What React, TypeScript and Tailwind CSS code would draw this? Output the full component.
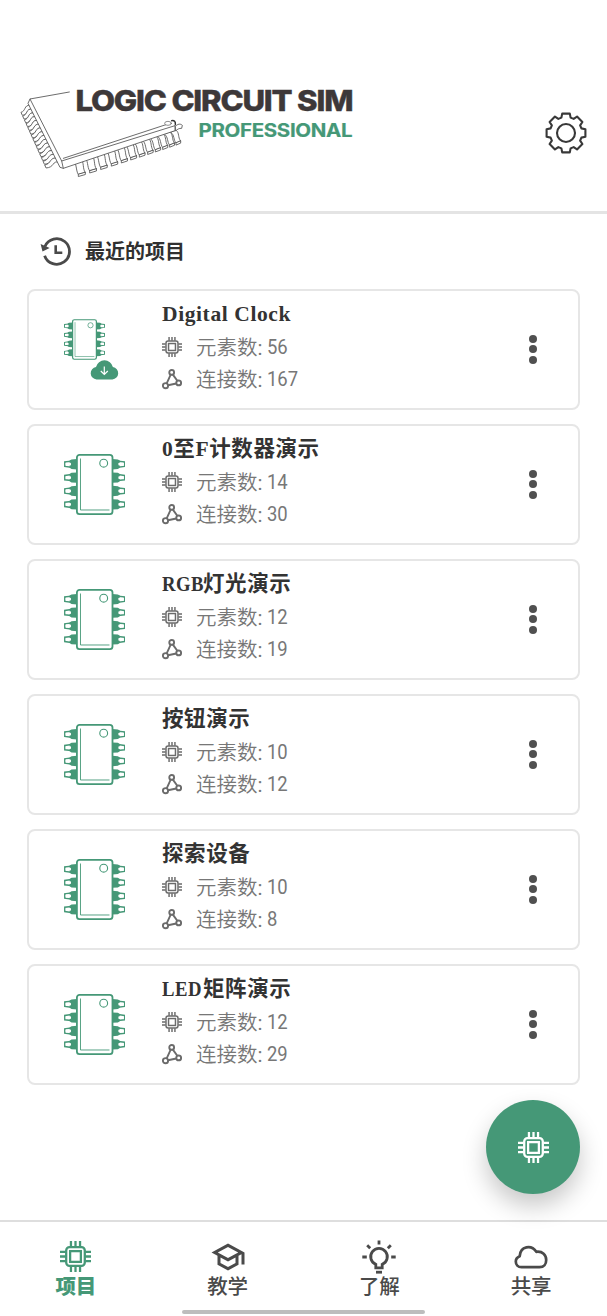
import React from 'react';
import { MdOutlineSchool } from 'react-icons/md';

type Project = { prefix?: string; title: string; elements: number; links: number; cloud?: boolean };

const projects: Project[] = [
  { title: 'Digital Clock', elements: 56, links: 167, cloud: true },
  { title: '0至F计数器演示', elements: 14, links: 30 },
  { prefix: 'RGB', title: '灯光演示', elements: 12, links: 19 },
  { title: '按钮演示', elements: 10, links: 12 },
  { title: '探索设备', elements: 10, links: 8 },
  { prefix: 'LED', title: '矩阵演示', elements: 12, links: 29 },
];

function Logo() {
  const left = Array.from({ length: 15 }, (_, i) => i / 14);
  const right = [190, 224, 257, 289, 319, 347, 373, 398, 421, 443, 464, 483];
  return (
    <svg viewBox="0 0 345 105" className="h-[105px] w-[345px]" fill="none">
      <g transform="scale(0.33333)" stroke="#555" strokeWidth="2.6" strokeLinejoin="round" strokeLinecap="round">
        {left.map((t, i) => {
          const x = 60 + t * 82;
          const y = 76 + t * 158;
          const s = 1 + t * 0.4;
          return (
            <path
              key={i}
              fill="#fff"
              d={`M${x} ${y}c${-9 * s} -1 ${-12 * s} 3 ${-15 * s} 9s${-5 * s} 10 ${-12 * s} 12l4 9c${8 * s} -1 ${12 * s} -5 ${15 * s} -11s${6 * s} -9 ${13 * s} -7`}
            />
          );
        })}
        {right.map((x, i) => {
          const t = i / 11;
          const y = 241 - ((x - 192) / 292) * 84;
          const h = 42 - t * 10;
          const w = 21 - t * 7;
          return (
            <g key={i}>
              <path fill="#fff" d={`M${x} ${y}c11 8 7 ${h * 0.7} 15 ${h}l${w} -6c-9 -12 -3 -${h * 0.75} -13 -${h}z`} />
              <path fill="#fff" d={`M${x + 15} ${y + h}v6l${w} -6v-6z`} />
            </g>
          );
        })}
        <path fill="#fff" stroke="none" d="M60 57L178 36L490 130L499 136L495 152L160 265L150 262L54 70Z" />
        <path d="M178 36L60 57L155 243L495 137M60 57L54 70L150 262L160 265L495 152V137M155 243L160 265M160 235L480 130" strokeWidth="2.6" />
        <ellipse cx="474" cy="130" rx="10" ry="6" strokeWidth="2" fill="#fff" />
        <path fill="#fff" d="M497 138c6-6 14-8 20-2l-2 9c-8 0-12 2-17 7z" />
        <path d="M485 122c8-1 12 2 11 11" strokeWidth="4.5" stroke="#333" />
      </g>
      <text x="59.5" y="30.6" transform="scale(1.1 1)" fill="#3d3839" stroke="#3d3839" strokeWidth="0.4" fontSize="28.3" textLength="252.8" lengthAdjust="spacing" className="font-[Inter,sans-serif] font-extrabold">
        LOGIC CIRCUIT SIM
      </text>
      <text x="168.3" y="57" transform="scale(1.12 1)" fill="#459877" stroke="#459877" strokeWidth="0.2" fontSize="18.3" textLength="137.6" lengthAdjust="spacing" className="font-[Inter,sans-serif] font-bold">
        PROFESSIONAL
      </text>
    </svg>
  );
}

function Gear() {
  const pts: string[] = [];
  for (let i = 0; i < 8; i++) {
    const a = (i * Math.PI) / 4;
    const shape: [number, number][] = [[-4.6, 15.4], [-3.8, 19.4], [3.8, 19.4], [4.6, 15.4]];
    shape.forEach(([u, r]) => {
      pts.push(`${(21 + u * Math.cos(a) + r * Math.sin(a)).toFixed(2)},${(21 + u * Math.sin(a) - r * Math.cos(a)).toFixed(2)}`);
    });
  }
  return (
    <svg viewBox="0 0 42 42" className="size-[42px]" fill="none" stroke="#383838" strokeWidth="2.1" strokeLinejoin="round">
      <polygon points={pts.join(' ')} />
      <circle cx="21" cy="21" r="9" />
    </svg>
  );
}

function History() {
  return (
    <svg viewBox="0 0 31 29" className="h-[29px] w-[31px]" fill="none" stroke="#4a4a4a" strokeWidth="2.8">
      <path d="M4.6 18.7A12.8 12.8 0 1 0 4.9 9.5" />
      <path d="M.6 7l1.9 7.6L9.6 11z" fill="#4a4a4a" stroke="none" />
      <path d="M15.7 8.2v7.6h6.6" strokeWidth="2.6" />
    </svg>
  );
}

function Cpu({ className }: { className: string }) {
  return (
    <svg viewBox="0 0 30 30" className={className} fill="none" stroke="currentColor" strokeWidth="2.2" strokeLinecap="butt">
      <rect x="6" y="6" width="18" height="18" rx="3.2" />
      <rect x="9.8" y="9.8" width="10.4" height="10.4" />
      <path d="M10.6 0v5.5M15 0v5.5M19.4 0v5.5M10.6 24.5V30M15 24.5V30M19.4 24.5V30M0 10.6h5.5M0 15h5.5M0 19.4h5.5M24.5 10.6H30M24.5 15H30M24.5 19.4H30" />
    </svg>
  );
}

function Links() {
  return (
    <svg viewBox="0 0 20 21" className="h-[21px] w-5" fill="none" stroke="#6b6b6b" strokeWidth="1.9">
      <circle cx="9.7" cy="3.4" r="2.4" />
      <circle cx="3.5" cy="16.7" r="2.6" />
      <circle cx="16.7" cy="13.9" r="2.4" />
      <path d="M8.7 5.6L4.7 14.3M10.9 5.6l4.4 6.2M6 16.2l8.3-1.7" />
    </svg>
  );
}

function Pin({ y }: { y: number }) {
  return (
    <>
      <path d={`M13 ${y - 5.2}L7.5 ${y - 4.8}L5.6 ${y - 3.6}V${y + 3.6}L7.5 ${y + 4.8}L13 ${y + 5.2}Z`} fill="#459877" stroke="none" />
      <path d={`M7.4 ${y - 3}L.8 ${y - 2.2}V${y + 2.2}L7.4 ${y + 3}`} strokeWidth="1.5" fill="none" />
      <rect x="1.6" y={y - 1.4} width="5.4" height="2.8" rx="0.8" fill="#fff" stroke="none" />
    </>
  );
}

function Chip({ className }: { className: string }) {
  const rows = [10.2, 23.6, 37, 50.4];
  return (
    <svg viewBox="0 0 61.4 61" className={className} stroke="#459877" fill="none">
      {rows.map((y) => <Pin key={y} y={y} />)}
      <g transform="translate(61.4 0) scale(-1 1)">
        {rows.map((y) => <Pin key={y} y={y} />)}
      </g>
      <rect x="12.9" y="0.9" width="35.6" height="59.2" rx="2.6" strokeWidth="1.8" fill="#fff" />
      <path d="M16.5 4.5V56H45.5" strokeWidth="0.9" />
      <circle cx="39.7" cy="9.2" r="3.9" strokeWidth="1.1" />
    </svg>
  );
}

function CloudDownload() {
  return (
    <svg viewBox="0 0 29 21" className="absolute left-[26px] top-[40px] h-[21px] w-[29px]">
      <path fill="#459877" d="M6.5 20.5A6.3 6.3 0 0 1 6 8 8.7 8.7 0 0 1 22.9 8 6.3 6.3 0 0 1 22.4 20.5Z" />
      <path d="M14.3 7.6v7.8M10.8 12l3.5 3.5 3.5-3.5" fill="none" stroke="#fff" strokeWidth="1.2" />
    </svg>
  );
}

function Meta({ icon, label, value }: { icon: React.ReactNode; label: string; value: number }) {
  return (
    <div className="flex h-8 items-center text-[#777]">
      {icon}
      <span className="ml-[14px] whitespace-nowrap font-['Noto_Sans_CJK_SC',sans-serif] text-[20.5px] font-[350] leading-8">
        {label}<span className="font-[Roboto,sans-serif] font-normal">:</span>
      </span>
      <span className="ml-[5px] origin-left scale-x-[0.9] font-[Roboto,sans-serif] text-[20.5px] leading-8">{value}</span>
    </div>
  );
}

function Card({ p }: { p: Project }) {
  return (
    <article className="flex h-[121px] rounded-[8px] border-2 border-[#e6e6e6] bg-white">
      <div className="w-[133px] shrink-0 pl-[35px] pt-7">
        {p.cloud ? (
          <div className="relative">
            <Chip className="h-[41px] w-[41px]" />
            <CloudDownload />
          </div>
        ) : (
          <Chip className="h-[61px] w-[61.4px]" />
        )}
      </div>
      <div className="grow pt-[8px]">
        <h2 className="flex h-8 whitespace-nowrap font-['Liberation_Serif','Noto_Sans_CJK_SC',serif] text-[21.5px] font-bold leading-[31px] tracking-[0.6px] text-[#333]">
          {p.prefix && <span className="w-[41px] origin-left scale-x-[0.87]">{p.prefix}</span>}
          <span>{p.title}</span>
        </h2>
        <Meta icon={<Cpu className="size-5 text-[#6b6b6b]" />} label="元素数" value={p.elements} />
        <Meta icon={<Links />} label="连接数" value={p.links} />
      </div>
      <button aria-label={p.title} className="mr-[41px] flex w-2 flex-col items-center justify-center gap-[2.5px] pb-px">
        <i className="size-2 shrink-0 rounded-full bg-[#505050]" />
        <i className="size-2 shrink-0 rounded-full bg-[#505050]" />
        <i className="size-2 shrink-0 rounded-full bg-[#505050]" />
      </button>
    </article>
  );
}

function Bulb() {
  return (
    <svg viewBox="0 0 34 34" className="h-[34px] w-[34px]" fill="none" stroke="#4a4a4a" strokeWidth="2.8">
      <path d="M13.8 27.8v-3.4a8.3 8.3 0 1 1 6.4 0v3.4z" />
      <path d="M14 32.2h6" />
      <path d="M17 .4v4.2M.3 17h4.5M29.2 17h4.5M5.2 5.2l3 3M28.8 5.2l-3 3" />
    </svg>
  );
}

function Cloud() {
  return (
    <svg viewBox="0 0 34 24" className="h-6 w-[34px]" fill="none" stroke="#4a4a4a" strokeWidth="2.7" strokeLinejoin="round">
      <path d="M7.5 22.2H25.5C30 22.2 32.2 19 32.2 14.9C32.2 10 28.6 6 22.3 6.8C17.5-.4 6.3.8 5.7 11.2C2.6 12.5 1.8 14.6 1.8 16.4C1.8 19.8 4 22.2 7.5 22.2Z" />
    </svg>
  );
}

const tabs = [
  { label: '项目', icon: <Cpu className="size-[31px]" />, active: true },
  { label: '教学', icon: <MdOutlineSchool className="size-9" /> },
  { label: '了解', icon: <Bulb /> },
  { label: '共享', icon: <Cloud /> },
];

export default function App() {
  return (
    <div className="relative flex h-[1316px] w-[607px] flex-col overflow-hidden bg-white">
      <header className="flex h-[214px] shrink-0 items-start justify-between border-b-[3px] border-[#e4e4e4] pl-[10px] pr-[20px] pt-20">
        <Logo />
        <div className="mt-8"><Gear /></div>
      </header>
      <main className="flex grow flex-col px-[27px]">
        <div className="flex h-[75px] items-center pl-[13px]">
          <History />
          <h1 className="ml-[14px] pb-0.5 font-['Noto_Sans_CJK_SC',sans-serif] text-[20px] font-bold text-[#303030]">最近的项目</h1>
        </div>
        <div className="flex flex-col gap-[14px]">
          {projects.map((p) => <Card key={p.title} p={p} />)}
        </div>
      </main>
      <nav className="flex h-[96px] shrink-0 flex-col border-t-2 border-[#dedede]">
        <div className="grid h-[88px] grid-cols-4">
          {tabs.map((t) => (
            <div key={t.label} className={t.active ? 'flex flex-col items-center pt-[17px] text-[#459877]' : 'flex flex-col items-center pt-[17px] text-[#4a4a4a]'}>
              <span className="flex h-[35px] items-center justify-center">{t.icon}</span>
              <span className={t.active ? "font-['Noto_Sans_CJK_SC',sans-serif] text-[20.5px] font-extrabold leading-[22px]" : "font-['Noto_Sans_CJK_SC',sans-serif] text-[20.5px] font-medium leading-[22px]"}>{t.label}</span>
            </div>
          ))}
        </div>
        <div className="mx-auto h-1 w-[243px] rounded-full bg-[#bdbdbd]" />
      </nav>
      <button aria-label="新建" className="absolute left-[486px] top-[1100px] flex size-[94px] items-center justify-center rounded-full bg-[#459877] text-white shadow-[0_12px_24px_rgba(0,0,0,0.22)]">
        <Cpu className="size-[31px]" />
      </button>
    </div>
  );
}
